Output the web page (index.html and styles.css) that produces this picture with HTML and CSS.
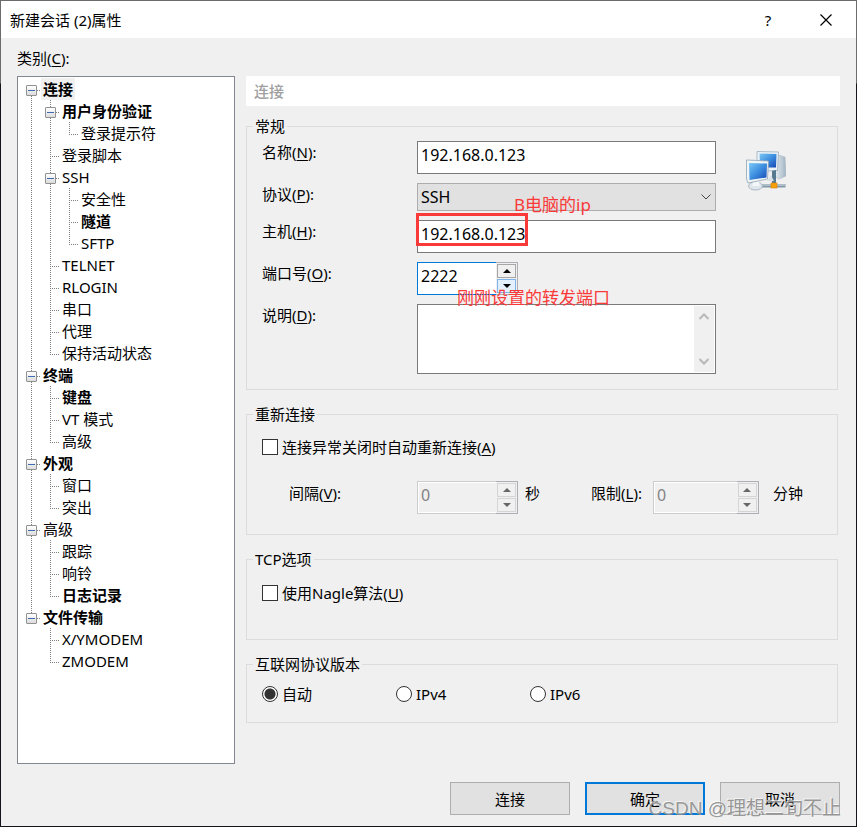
FILE: index.html
```
<!DOCTYPE html>
<html lang="zh-CN">

<head>
    <meta charset="UTF-8">
    <meta name="viewport" content="width=device-width, initial-scale=1.0">
    <title>新建会话 (2)属性</title>
    <link rel="stylesheet" href="styles.css">
</head>

<body>
    <div class="window">
        <header class="titlebar">
            <h1>新建会话 (2)属性</h1>
            <button type="button" class="title-btn" aria-label="帮助">?</button>
            <button type="button" class="title-btn" aria-label="关闭">
                <svg width="12" height="12" viewBox="0 0 12 12">
                    <path d="M0.5 0.5 L11.5 11.5 M11.5 0.5 L0.5 11.5" stroke="#000" stroke-width="1.2" fill="none" />
                </svg>
            </button>
        </header>

        <div class="content">
            <nav class="side">
                <h2>类别(<u>C</u>):</h2>
                <div class="tree">
                    <ul>
                        <li>
                            <div class="row"><button type="button" class="toggle" aria-label="折叠"></button><span class="bold selected">连接</span></div>
                            <ul>
                                <li>
                                    <div class="row"><button type="button" class="toggle" aria-label="折叠"></button><span class="bold">用户身份验证</span></div>
                                    <ul>
                                        <li><div class="row leaf"><span>登录提示符</span></div></li>
                                    </ul>
                                </li>
                                <li><div class="row leaf"><span>登录脚本</span></div></li>
                                <li>
                                    <div class="row"><button type="button" class="toggle" aria-label="折叠"></button><span>SSH</span></div>
                                    <ul>
                                        <li><div class="row leaf"><span>安全性</span></div></li>
                                        <li><div class="row leaf"><span class="bold">隧道</span></div></li>
                                        <li><div class="row leaf"><span>SFTP</span></div></li>
                                    </ul>
                                </li>
                                <li><div class="row leaf"><span>TELNET</span></div></li>
                                <li><div class="row leaf"><span>RLOGIN</span></div></li>
                                <li><div class="row leaf"><span>串口</span></div></li>
                                <li><div class="row leaf"><span>代理</span></div></li>
                                <li><div class="row leaf"><span>保持活动状态</span></div></li>
                            </ul>
                        </li>
                        <li>
                            <div class="row"><button type="button" class="toggle" aria-label="折叠"></button><span class="bold">终端</span></div>
                            <ul>
                                <li><div class="row leaf"><span class="bold">键盘</span></div></li>
                                <li><div class="row leaf"><span>VT 模式</span></div></li>
                                <li><div class="row leaf"><span>高级</span></div></li>
                            </ul>
                        </li>
                        <li>
                            <div class="row"><button type="button" class="toggle" aria-label="折叠"></button><span class="bold">外观</span></div>
                            <ul>
                                <li><div class="row leaf"><span>窗口</span></div></li>
                                <li><div class="row leaf"><span>突出</span></div></li>
                            </ul>
                        </li>
                        <li>
                            <div class="row"><button type="button" class="toggle" aria-label="折叠"></button><span>高级</span></div>
                            <ul>
                                <li><div class="row leaf"><span>跟踪</span></div></li>
                                <li><div class="row leaf"><span>响铃</span></div></li>
                                <li><div class="row leaf"><span class="bold">日志记录</span></div></li>
                            </ul>
                        </li>
                        <li>
                            <div class="row"><button type="button" class="toggle" aria-label="折叠"></button><span class="bold">文件传输</span></div>
                            <ul>
                                <li><div class="row leaf"><span>X/YMODEM</span></div></li>
                                <li><div class="row leaf"><span>ZMODEM</span></div></li>
                            </ul>
                        </li>
                    </ul>
                </div>
            </nav>

            <form class="panel">
                <h2 class="panel-title">连接</h2>

                <fieldset>
                    <legend>常规</legend>
                    <div class="general">
                        <div class="fields">
                            <label for="name">名称(<u>N</u>):</label>
                            <input type="text" id="name" class="text" value="192.168.0.123">

                            <label for="protocol">协议(<u>P</u>):</label>
                            <div class="combo">
                                <select id="protocol">
                                    <option>SSH</option>
                                </select>
                                <svg width="10" height="6" viewBox="0 0 10 6">
                                    <path d="M0.5 0.5 L5 5 L9.5 0.5" stroke="#444" fill="none" />
                                </svg>
                                <span class="note note-host">B电脑的ip</span>
                            </div>

                            <label for="host">主机(<u>H</u>):</label>
                            <div class="host">
                                <input type="text" id="host" class="text" value="192.168.0.123">
                                <span class="mark"></span>
                            </div>

                            <label for="port">端口号(<u>O</u>):</label>
                            <div class="spin active">
                                <input type="text" id="port" value="2222">
                                <div class="arrows">
                                    <button type="button" aria-label="增加"><svg width="8" height="4" viewBox="0 0 8 4"><path d="M0 4 L4 0 L8 4 Z" /></svg></button>
                                    <button type="button" class="hot" aria-label="减少"><svg width="8" height="4" viewBox="0 0 8 4"><path d="M0 0 L4 4 L8 0 Z" /></svg></button>
                                </div>
                                <span class="note note-port">刚刚设置的转发端口</span>
                            </div>

                            <label for="desc">说明(<u>D</u>):</label>
                            <div class="memo">
                                <textarea id="desc"></textarea>
                                <div class="scroll">
                                    <svg width="10" height="7" viewBox="0 0 10 7"><path d="M0.5 6 L5 1.5 L9.5 6" stroke="#b8b8b8" stroke-width="2" fill="none" /></svg>
                                    <svg width="10" height="7" viewBox="0 0 10 7"><path d="M0.5 1 L5 5.5 L9.5 1" stroke="#b8b8b8" stroke-width="2" fill="none" /></svg>
                                </div>
                            </div>
                        </div>

                        <svg class="net-icon" width="40" height="40" viewBox="0 0 40 40">
                            <defs>
                                <linearGradient id="screen" x1="0" y1="0" x2="1" y2="1">
                                    <stop offset="0" stop-color="#7cc8f5" />
                                    <stop offset="0.5" stop-color="#3d8fe0" />
                                    <stop offset="1" stop-color="#1846b4" />
                                </linearGradient>
                                <linearGradient id="tower" x1="0" y1="0" x2="1" y2="0">
                                    <stop offset="0" stop-color="#f6f9fb" />
                                    <stop offset="1" stop-color="#9fb2c2" />
                                </linearGradient>
                            </defs>
                            <path d="M32 4 L39 6 L40 25 L33 28 L27 24 Z" fill="url(#tower)" stroke="#a9b8c5" stroke-width="0.6" />
                            <path d="M34 9 V24 M36 9 V24" stroke="#c3d0da" stroke-width="0.8" />
                            <path d="M11 0.5 L32.5 1 L31.5 19.5 L21 20 L11 16 Z" fill="#edf3f7" stroke="#9badbb" stroke-width="0.8" />
                            <path d="M13.5 2.5 L30.5 3 L30 16.5 L14 16.5 Z" fill="url(#screen)" />
                            <path d="M26 20 L30 19 L30 33 L26 33 Z" fill="#55798f" />
                            <path d="M25 24 L21 30 L28 30 Z" fill="#d7e0e6" />
                            <path d="M14 33 H39.5 V36.5 H14 Z" fill="#8298a7" />
                            <path d="M14 34 H39" stroke="#d9e2e8" />
                            <ellipse cx="9.5" cy="35" rx="7" ry="4" fill="#dfe7ed" stroke="#9aacba" stroke-width="0.8" />
                            <path d="M7 29 H13 L13.5 35 H6.5 Z" fill="#f3f7fa" />
                            <path d="M0.5 9 L22.5 10 L21.5 28 L2 32 L0.5 28 Z" fill="#f0f5f8" stroke="#8fa3b3" stroke-width="0.8" />
                            <path d="M3 12 L21 12.5 L20.5 26.5 L3.5 29 Z" fill="url(#screen)" />
                            <rect x="25" y="32" width="6" height="5" fill="#f7a10a" stroke="#d98008" stroke-width="0.6" />
                        </svg>
                    </div>
                </fieldset>

                <fieldset>
                    <legend>重新连接</legend>
                    <div class="group reconnect">
                        <label class="check"><input type="checkbox">连接异常关闭时自动重新连接(<u>A</u>)</label>
                        <div class="timing">
                            <label for="interval" class="interval">间隔(<u>V</u>):</label>
                            <div class="spin">
                                <input type="text" id="interval" value="0" disabled>
                                <div class="arrows">
                                    <button type="button" disabled aria-label="增加"><svg width="8" height="4" viewBox="0 0 8 4"><path d="M0 4 L4 0 L8 4 Z" /></svg></button>
                                    <button type="button" disabled aria-label="减少"><svg width="8" height="4" viewBox="0 0 8 4"><path d="M0 0 L4 4 L8 0 Z" /></svg></button>
                                </div>
                            </div>
                            <span class="unit">秒</span>
                            <label for="limit">限制(<u>L</u>):</label>
                            <div class="spin wide">
                                <input type="text" id="limit" value="0" disabled>
                                <div class="arrows">
                                    <button type="button" disabled aria-label="增加"><svg width="8" height="4" viewBox="0 0 8 4"><path d="M0 4 L4 0 L8 4 Z" /></svg></button>
                                    <button type="button" disabled aria-label="减少"><svg width="8" height="4" viewBox="0 0 8 4"><path d="M0 0 L4 4 L8 0 Z" /></svg></button>
                                </div>
                            </div>
                            <span class="unit-far">分钟</span>
                        </div>
                    </div>
                </fieldset>

                <fieldset>
                    <legend>TCP选项</legend>
                    <div class="group tcp">
                        <label class="check"><input type="checkbox">使用Nagle算法(<u>U</u>)</label>
                    </div>
                </fieldset>

                <fieldset>
                    <legend>互联网协议版本</legend>
                    <div class="group versions">
                        <label class="check"><input type="radio" name="ip" checked>自动</label>
                        <label class="check"><input type="radio" name="ip">IPv4</label>
                        <label class="check"><input type="radio" name="ip">IPv6</label>
                    </div>
                </fieldset>
            </form>
        </div>

        <footer class="actions">
            <button type="button">连接</button>
            <button type="button" class="default">确定</button>
            <button type="button">取消</button>
        </footer>

        <span class="watermark">CSDN @理想二旬不止</span>
    </div>
</body>

</html>
```
FILE: styles.css
```
* {
    margin: 0;
    padding: 0;
    box-sizing: border-box;
}

body {
    display: flex;
    min-height: 100vh;
    padding: 1px;
    background: linear-gradient(#6b6b6b 83px, #14141a 84px);
    font-family: "Noto Sans", "Noto Sans CJK SC", sans-serif;
    font-size: 15px;
    line-height: 24px;
    color: #000;
}

button,
input,
select,
textarea {
    font-family: inherit;
    font-size: 15px;
    color: inherit;
}

u {
    text-underline-offset: 2px;
}

.window {
    position: relative;
    flex: 1;
    display: flex;
    flex-direction: column;
    background: #f0f0f0;
}

/* title bar */

.titlebar {
    display: flex;
    align-items: center;
    height: 37px;
    padding: 0 1px 0 9px;
    background: #fff;
}

.titlebar h1 {
    flex: 1;
    font-size: 15px;
    font-weight: normal;
}

.title-btn {
    display: flex;
    align-items: center;
    justify-content: center;
    width: 58px;
    height: 36px;
    border: none;
    background: none;
}

.content {
    flex: 1;
    display: flex;
    gap: 11px;
    padding: 8px 16px 0;
}

/* category tree */

.side {
    display: flex;
    flex-direction: column;
    width: 218px;
}

.side h2 {
    height: 30px;
    font-size: 15px;
    font-weight: normal;
}

.tree {
    flex: 1;
    padding: 1px 8px;
    border: 1px solid #828790;
    background: #fff;
}

.tree ul {
    list-style: none;
}

.tree ul ul {
    padding-left: 19px;
}

/* dotted connectors: vertical line, then the short horizontal one */
.tree li {
    background-image:
        repeating-linear-gradient(to bottom, #808080 0 1px, transparent 1px 2px),
        repeating-linear-gradient(to right, #808080 0 1px, transparent 1px 2px);
    background-repeat: no-repeat;
    background-position: 5px 0, 5px 12px;
    background-size: 1px 100%, 10px 1px;
}

.tree > ul > li:first-child {
    background-position: 5px 12px, 5px 12px;
}

.tree li:last-child {
    background-size: 1px 12px, 10px 1px;
}

.row {
    display: flex;
    align-items: flex-start;
    gap: 4px;
    height: 22px;
    line-height: 22px;
}

.leaf {
    padding-left: 15px;
}

.row span {
    padding: 0 2px;
    white-space: nowrap;
}

.bold {
    font-weight: bold;
}

.selected {
    background: #f0f0f0;
}

.toggle {
    width: 11px;
    height: 11px;
    margin-top: 7px;
    border: 1px solid #919191;
    border-radius: 1px;
    background:
        linear-gradient(#4068b0, #4068b0) center / 7px 1px no-repeat,
        linear-gradient(#fff, #dcdcdc);
}

/* right side */

.panel {
    flex: 1;
    min-width: 0;
    padding-top: 30px;
}

.panel-title {
    height: 30px;
    padding-left: 8px;
    margin-bottom: 10px;
    background: #fff;
    color: #a0a0a0;
    font-size: 15px;
    font-weight: 500;
    line-height: 30px;
}

fieldset {
    min-width: 0;
    margin: 0 2px 14px 0;
    padding: 0 6px;
    border: 1px solid #dcdcdc;
}

legend {
    padding: 0 2px;
    line-height: 20px;
}

.general {
    display: flex;
    gap: 30px;
    padding: 5px 45px 15px 9px;
}

.fields {
    flex: 1;
    display: grid;
    grid-template-columns: 155px minmax(0, 1fr);
    row-gap: 9px;
    align-items: start;
}

.fields label {
    line-height: 22px;
}

.net-icon {
    margin-top: 10px;
}

.text {
    display: block;
    width: 100%;
    height: 33px;
    padding: 0 3px 6px;
    border: 1px solid #7a7a7a;
    background: #fff;
    font-size: 16px;
}

.combo {
    position: relative;
    display: grid;
    align-items: center;
}

.combo select,
.combo svg {
    grid-area: 1 / 1;
}

.combo select {
    width: 100%;
    height: 28px;
    padding: 0 3px;
    border: 1px solid #adadad;
    border-radius: 0;
    background: #e1e1e1;
    font-size: 16px;
    appearance: none;
}

.combo svg {
    justify-self: end;
    margin-right: 5px;
    pointer-events: none;
}

.host {
    position: relative;
}

/* red annotations over the form */

.mark {
    position: absolute;
    top: -7px;
    left: -1px;
    width: 112px;
    height: 33px;
    border: 3px solid #fa3939;
}

.note {
    position: absolute;
    color: #fa3939;
    font-size: 17px;
    white-space: nowrap;
    z-index: 1;
}

.note-host {
    top: 10px;
    left: 97px;
}

.note-port {
    top: 24px;
    left: 40px;
}

/* number boxes */

.spin {
    position: relative;
    display: flex;
    width: 101px;
    height: 33px;
}

.spin.wide {
    width: 106px;
}

.spin input {
    flex: 1;
    min-width: 0;
    padding: 0 3px 6px;
    border: 1px solid #ccc;
    border-right: none;
    border-radius: 0;
    background: #f0f0f0;
    box-shadow: inset 1px 1px #fff, inset 0 -1px #fff;
    color: #838383;
    font-size: 16px;
}

.spin.active input {
    border-color: #0078d7;
    background: #fff;
    color: #000;
}

.arrows {
    display: flex;
    flex-direction: column;
    gap: 1px;
    width: 22px;
    padding: 1px;
    border: 1px solid #adadb3;
    border-left: none;
}

.arrows button {
    flex: 1;
    display: flex;
    align-items: center;
    justify-content: center;
    border: 1px solid #d5d5d5;
    background: #f0f0f0;
    fill: #666;
}

.active .arrows button {
    border-color: #a6a6a6;
    fill: #000;
}

.active .arrows .hot {
    border-color: #7eb4ea;
    background: #e3f0fc;
}

.memo {
    display: flex;
    height: 70px;
    padding: 1px;
    border: 1px solid #7a7a7a;
    background: #fff;
}

.memo textarea {
    flex: 1;
    min-width: 0;
    border: none;
    resize: none;
    outline: none;
}

.scroll {
    display: flex;
    flex-direction: column;
    align-items: center;
    justify-content: space-between;
    width: 20px;
    padding: 7px 0;
    background: #f0f0f0;
}

/* check boxes and radios */

.group {
    padding-left: 9px;
}

.check {
    display: inline-flex;
    align-items: center;
    white-space: nowrap;
}

.check input {
    width: 16px;
    height: 16px;
    margin-right: 4px;
    border: 1px solid #333;
    background: #fff;
    appearance: none;
}

.check input[type="radio"] {
    border-radius: 50%;
}

.check input[type="radio"]:checked {
    background: radial-gradient(circle, #333 5px, #fff 6px);
}

.reconnect {
    padding-top: 11px;
    padding-bottom: 20px;
}

.timing {
    display: flex;
    align-items: flex-start;
    margin-top: 20px;
    padding-left: 27px;
    white-space: nowrap;
}

.interval {
    width: 128px;
}

.unit {
    width: 66px;
    margin-left: 7px;
}

.timing .wide {
    margin-left: 11px;
}

.unit-far {
    margin-left: 14px;
}

.tcp {
    padding-top: 12px;
    padding-bottom: 32px;
}

.versions {
    display: flex;
    padding-top: 8px;
    padding-bottom: 16px;
}

.versions .check {
    width: 134px;
}

/* bottom buttons */

.actions {
    display: flex;
    justify-content: flex-end;
    gap: 15px;
    padding: 18px 16px 11px;
}

.actions button {
    width: 120px;
    height: 33px;
    border: 1px solid #adadad;
    background: #e1e1e1;
}

.actions .default {
    border: 2px solid #0078d7;
}

.watermark {
    position: absolute;
    right: 15px;
    bottom: 5px;
    color: rgba(140, 140, 140, 0.9);
    font-family: "Liberation Sans", "Noto Sans CJK SC", sans-serif;
    font-size: 19px;
    text-shadow: -1px -1px rgba(255, 255, 255, 0.7);
    pointer-events: none;
}
```
